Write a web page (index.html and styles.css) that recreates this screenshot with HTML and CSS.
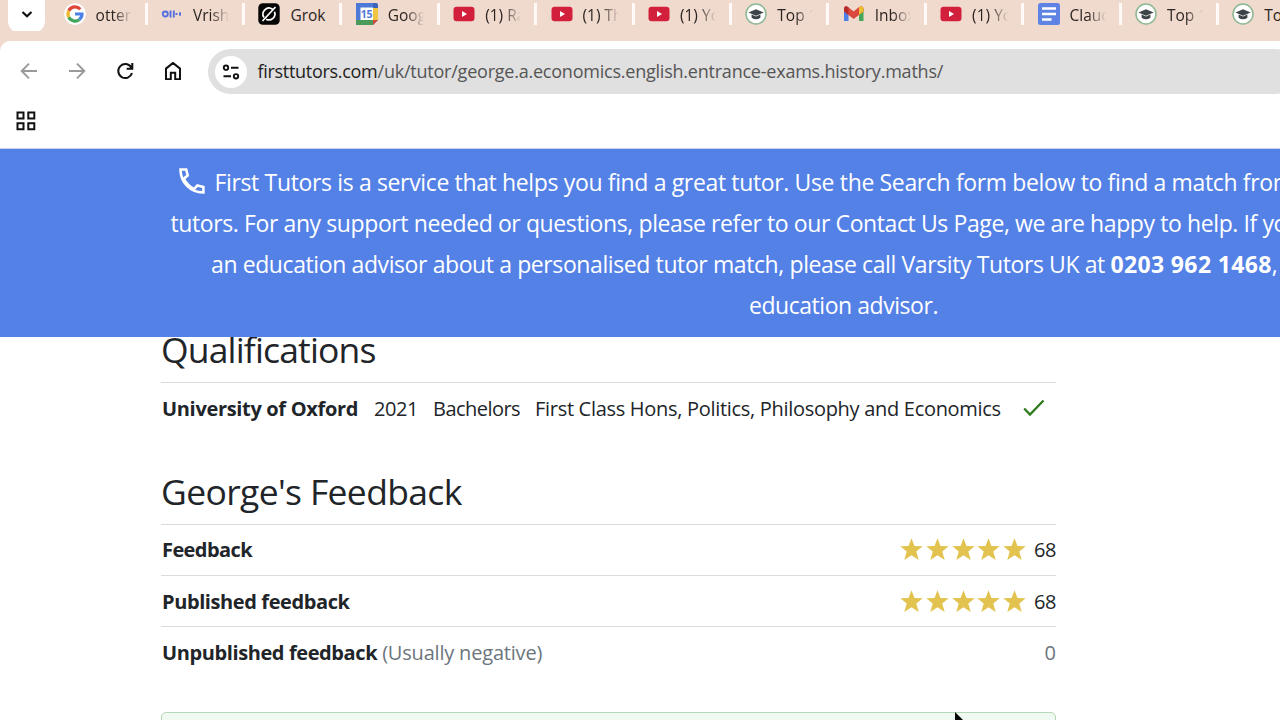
FILE: index.html
```html
<!DOCTYPE html>
<html lang="en">
<head><meta charset="utf-8"><title>First Tutors</title><link rel="stylesheet" href="styles.css"></head>
<body>
<svg width="0" height="0" class="defs">
<symbol id="youtube" viewBox="0 0 22 22"><rect x=".5" y="3.8" width="21" height="14.4" rx="3.2" fill="#d2203c"/><path d="M9 8v6l5-3z" fill="#fff"/></symbol>
<symbol id="cap" viewBox="0 0 22 22"><circle cx="11" cy="11" r="10" fill="#fff" stroke="#8cb893" stroke-width="1.5"/><path d="M3.500 9.500 11 6.200l7.700 3.300-7.700 3.300zM6.600 11.500v3.200q4.400 3 8.800 0v-3.200L11 13.600z" fill="#3d4447"/></symbol>
<symbol id="star" viewBox="0 0 24 24"><path d="M12 .3l3.100 8 8.600.4-6.700 5.400 2.500 8.900L12 18l-7.500 5L7 14.100.3 8.700l8.600-.4z" fill="#e2c34f"/></symbol>
</svg>
<header class="tabs">
<button class="tab-search"><svg width="14" height="14" viewBox="0 0 14 14"><path d="M2.500 5 7 9.300 11.500 5" fill="none" stroke="#111" stroke-width="2.200"/></svg></button>
<div class="tab"><svg class="fav" viewBox="0 0 22 22"><circle cx="11" cy="11" r="10.800" fill="#fff"/><g fill="none" stroke-width="3.200"><path d="M16.300 6.200A7 7 0 0 0 4.800 7.700" stroke="#df4538"/><path d="M4.800 7.700a7 7 0 0 0 0 6.600" stroke="#f0b82c"/><path d="M4.800 14.300a7 7 0 0 0 10.600 2.200" stroke="#43a65a"/><path d="M15.400 16.500A7 7 0 0 0 18 11h-7" stroke="#4b80e8"/></g></svg><span class="title">otter</span></div>
<div class="tab"><svg class="fav" viewBox="0 0 22 22"><g fill="none" stroke="#5570df" stroke-width="1.900"><circle cx="4.300" cy="11" r="2.500"/><path d="M9.500 7.500v7M12.800 7.500v7M15.500 10v2M19 9.300v3.400"/></g></svg><span class="title">Vrish</span></div>
<div class="tab"><svg class="fav" viewBox="0 0 22 22"><rect x=".3" y=".3" width="21.400" height="21.400" rx="4.500" fill="#050505"/><g fill="none" stroke="#fff" stroke-width="1.700"><path d="M14.500 6.300A6 6 0 0 0 6 14.500M16.500 8.700a6 6 0 0 1-8.300 7.500M4.500 18 17.500 4"/></g></svg><span class="title solid">Grok</span></div>
<div class="tab"><svg class="fav" viewBox="0 0 22 22"><path d="M0 0h20l2 2v15l-5 5H0z" fill="#4c78d6"/><path d="M17 5h5v12h-5z" fill="#f0c544"/><path d="M0 17h17v5H2q-2 0-2-2z" fill="#4a9b59"/><path d="M17 17h5l-5 5z" fill="#d74a3e"/><path d="M17 0h3q2 0 2 2v3h-5z" fill="#3c64b8"/><path d="M4.500 4.500H17V17H4.500z" fill="#fff"/><text x="4.800" y="15.300" class="cal">15</text></svg><span class="title">Goog</span></div>
<div class="tab"><svg class="fav"><use href="#youtube"/></svg><span class="title">(1) Ra</span></div>
<div class="tab"><svg class="fav"><use href="#youtube"/></svg><span class="title">(1) Th</span></div>
<div class="tab"><svg class="fav"><use href="#youtube"/></svg><span class="title">(1) Yo</span></div>
<div class="tab"><svg class="fav"><use href="#cap"/></svg><span class="title">Top 1</span></div>
<div class="tab"><svg class="fav" viewBox="0 0 22 22"><path d="M1 5h4.500v13H1z" fill="#4b80e8"/><path d="M16 5h4.500v13H16z" fill="#43a65a"/><path d="M1 5q1-3 4-1l5.700 4.500L16 4q3.500-2 4.500 1v3.500L10.700 16 1 8.500z" fill="#da473d"/><path d="M16 4q4-2 4.500 1.500v3L16 12z" fill="#efbd32"/><path d="M1 5q1-3 4.500-.8V12L1 8.500z" fill="#b62d30"/></svg><span class="title">Inbox</span></div>
<div class="tab"><svg class="fav"><use href="#youtube"/></svg><span class="title">(1) Yo</span></div>
<div class="tab"><svg class="fav" viewBox="0 0 22 22"><rect width="22" height="22" rx="2.500" fill="#5f83e5"/><path d="M4 5.500h14M4 11h14M4 16.500h9.500" stroke="#fff" stroke-width="2.500"/></svg><span class="title">Claud</span></div>
<div class="tab"><svg class="fav"><use href="#cap"/></svg><span class="title">Top 1</span></div>
<div class="tab"><svg class="fav"><use href="#cap"/></svg><span class="title solid">Top</span></div>
</header>
<nav class="browser">
<div class="toolbar">
<svg class="nav" viewBox="0 0 18 18"><path d="M17 9H2M9 1.700 1.700 9 9 16.300" stroke="#999"/></svg>
<svg class="nav" viewBox="0 0 18 18"><path d="M1 9h15M9 1.700 16.300 9 9 16.300" stroke="#999"/></svg>
<svg class="nav" viewBox="0 0 18 18"><path d="M15.300 5.500A7 7 0 1 0 16 11M16.300 1v5.700h-5.600" stroke="#111" stroke-width="2"/></svg>
<svg class="nav" viewBox="0 0 18 18"><path d="M2 17.300V6.600L9 .9l7 5.700v10.700h-4.800v-6.500H6.800v6.500z" stroke="#111" stroke-width="2"/></svg>
<div class="omnibox"><span class="site"><svg width="18" height="18" viewBox="0 0 18 18"><g fill="none" stroke="#111" stroke-width="1.900"><circle cx="4" cy="4.700" r="2.200"/><path d="M9 4.700h7.500M1.500 13.300H9"/><circle cx="14" cy="13.300" r="2.200"/></g></svg></span><span class="url"><span class="host">firsttutors.com</span><span class="path">/uk/tutor/george.a.economics.english.entrance-exams.history.maths/</span></span></div>
</div>
<div class="bookmarks"><svg width="20" height="20" viewBox="0 0 20 20"><path d="M1.500 1.500h6v6h-6zM12.300 1.500h6v6h-6zM1.500 12.300h6v6h-6zM12.300 12.300h6v6h-6z" fill="none" stroke="#111" stroke-width="2"/></svg></div>
</nav>
<section class="banner">
<p class="l1"><svg class="phone" viewBox="0 0 26 26"><path d="M1.500 1.500h5.700l1.500 6-4 3.200q3.600 7 10.300 10.500l3.400-3.800 6 1.500v5.600C11 24.500 1.500 14 1.500 1.500z" fill="none" stroke="#fff" stroke-width="2.600"/></svg>First Tutors is a service that helps you find a great tutor. Use the Search form below to find a match from</p>
<p class="l2">tutors. For any support needed or questions, please refer to our Contact Us Page, we are happy to help. If you</p>
<p class="l3">an education advisor about a personalised tutor match, please call Varsity Tutors UK at <b>0203 962 1468</b>,</p>
<p class="l4">education advisor.</p>
</section>
<main class="page">
<h2 class="q">Qualifications</h2>
<div class="row"><b class="uni">University of Oxford</b><span class="year">2021</span><span class="deg">Bachelors</span><span class="sub">First Class Hons, Politics, Philosophy and Economics</span><svg class="check" viewBox="0 0 22 18"><path d="M1.200 9.500 7 15.500 20.500 1.500" fill="none" stroke="#2f7a1d" stroke-width="2.300"/></svg></div>
<h2 class="f">George's Feedback</h2>
<div class="row"><b class="label short">Feedback</b><span class="rating"><svg class="star"><use href="#star"/></svg><svg class="star"><use href="#star"/></svg><svg class="star"><use href="#star"/></svg><svg class="star"><use href="#star"/></svg><svg class="star"><use href="#star"/></svg><span class="count">68</span></span></div>
<div class="row"><b class="label">Published feedback</b><span class="rating"><svg class="star"><use href="#star"/></svg><svg class="star"><use href="#star"/></svg><svg class="star"><use href="#star"/></svg><svg class="star"><use href="#star"/></svg><svg class="star"><use href="#star"/></svg><span class="count">68</span></span></div>
<div class="row"><b class="label">Unpublished feedback</b><span class="muted note">(Usually negative)</span><span class="rating muted">0</span></div>
<div class="notice"></div>
</main>
<svg class="cursor" viewBox="0 0 14 8"><path d="M0 0v8h8z" fill="#080808"/></svg>
</body></html>
```
FILE: styles.css
```css
*{box-sizing:border-box}
body{margin:0;width:1280px;height:720px;overflow:hidden;background:#fff;color:#212529;font-family:"Open Sans","Noto Sans",sans-serif;position:relative;display:flex;flex-direction:column}
.defs{position:absolute}
.tabs{flex:none;height:41px;display:flex;background:#f0d9cd;overflow:hidden}
.tab-search{border:0;flex:none;width:37px;height:33px;margin:0 5.300px 0 8px;border-radius:0 0 12px 12px;background:#fff;display:flex;justify-content:center;padding:7px 0 0}
.tab{flex:none;width:97.400px;height:22px;margin-top:3px;padding-left:13.300px;display:flex;align-items:center;border-right:3px solid #fffaf7}
.fav{width:22px;height:22px;flex:none}
.cal{font:bold 10.500px "Open Sans",sans-serif;fill:#4c78d6;letter-spacing:-.4px}
.title{position:relative;top:1px;margin-left:10px;width:36px;overflow:hidden;white-space:nowrap;font-size:15.500px;line-height:24px;color:#2b2522;-webkit-mask-image:linear-gradient(90deg,#000 50%,transparent);mask-image:linear-gradient(90deg,#000 50%,transparent)}
.solid{-webkit-mask-image:none;mask-image:none}
.browser{flex:none;height:107.500px;background:#fff;border-radius:10px 0 0;border-bottom:1px solid #c9d2e8;position:relative;box-shadow:-10px -10px 0 #f0d9cd}
.toolbar{display:flex;align-items:center;padding:8px 0 0 20px;height:53px}
.nav{flex:none;width:18px;height:18px;margin:0 30px 1px 0;fill:none;stroke-width:1.900}
.omnibox{flex:none;width:1090px;height:45px;margin-left:-4px;border-radius:23px;background:#e0e0e0;display:flex;align-items:center;padding-left:6.500px;font-size:18px;white-space:nowrap;color:#222}
.site{width:32px;height:32px;border-radius:50%;background:#fff;display:flex;align-items:center;justify-content:center;margin-right:11px;flex:none}
.url{margin-bottom:2px}
.host{letter-spacing:-.296px}
.path{color:#555;letter-spacing:-.225px}
.bookmarks{padding:17px 0 0 16px}
.banner{flex:none;height:188px;padding-top:13.500px;background:#5481e6;color:#fff;font-size:23px;overflow:hidden}
.banner p{margin:0;height:41px;line-height:41px;white-space:nowrap}
.banner b{letter-spacing:.370px}
.l1{padding-left:179px;letter-spacing:-.356px}
.l2{padding-left:170.500px;letter-spacing:-.398px}
.l3{padding-left:211px;letter-spacing:-.398px}
.l4{padding-left:749px;letter-spacing:-.456px}
.phone{width:26px;height:26px;margin-right:9.500px;vertical-align:-3px}
.page{flex:1;min-height:0;overflow:hidden;width:895px;margin-left:161px;font-size:20px}
h2{margin:0;font-weight:400;font-size:35.500px;line-height:44px;white-space:nowrap}
.q{margin-top:-9.500px;height:55px;letter-spacing:-.840px}
.f{height:54.700px;margin-top:35.600px;letter-spacing:-.650px}
.row{height:51.300px;border-top:1px solid #d9dcde;display:flex;align-items:center;white-space:nowrap;padding-left:1px}
.uni{letter-spacing:-.330px}
.label{letter-spacing:-.400px}
.short{letter-spacing:-.586px}
.year{margin-left:16px;letter-spacing:-.438px}
.deg{margin-left:15px;letter-spacing:-.545px}
.sub{margin-left:15px;letter-spacing:-.300px}
.check{width:22px;height:18px;margin-left:22px}
.rating{margin-left:auto;display:flex;align-items:center}
.star{width:23px;height:23px;margin-right:2.800px}
.count{margin-left:5px;letter-spacing:-.438px}
.muted{color:#6c757d}
.note{margin-left:5px;letter-spacing:-.193px}
.notice{height:60px;margin-top:34.300px;border:1.500px solid #b4d8b6;border-radius:5px;background:#eff8f1}
.cursor{position:absolute;left:955px;top:712px;width:14px;height:8px}
```
